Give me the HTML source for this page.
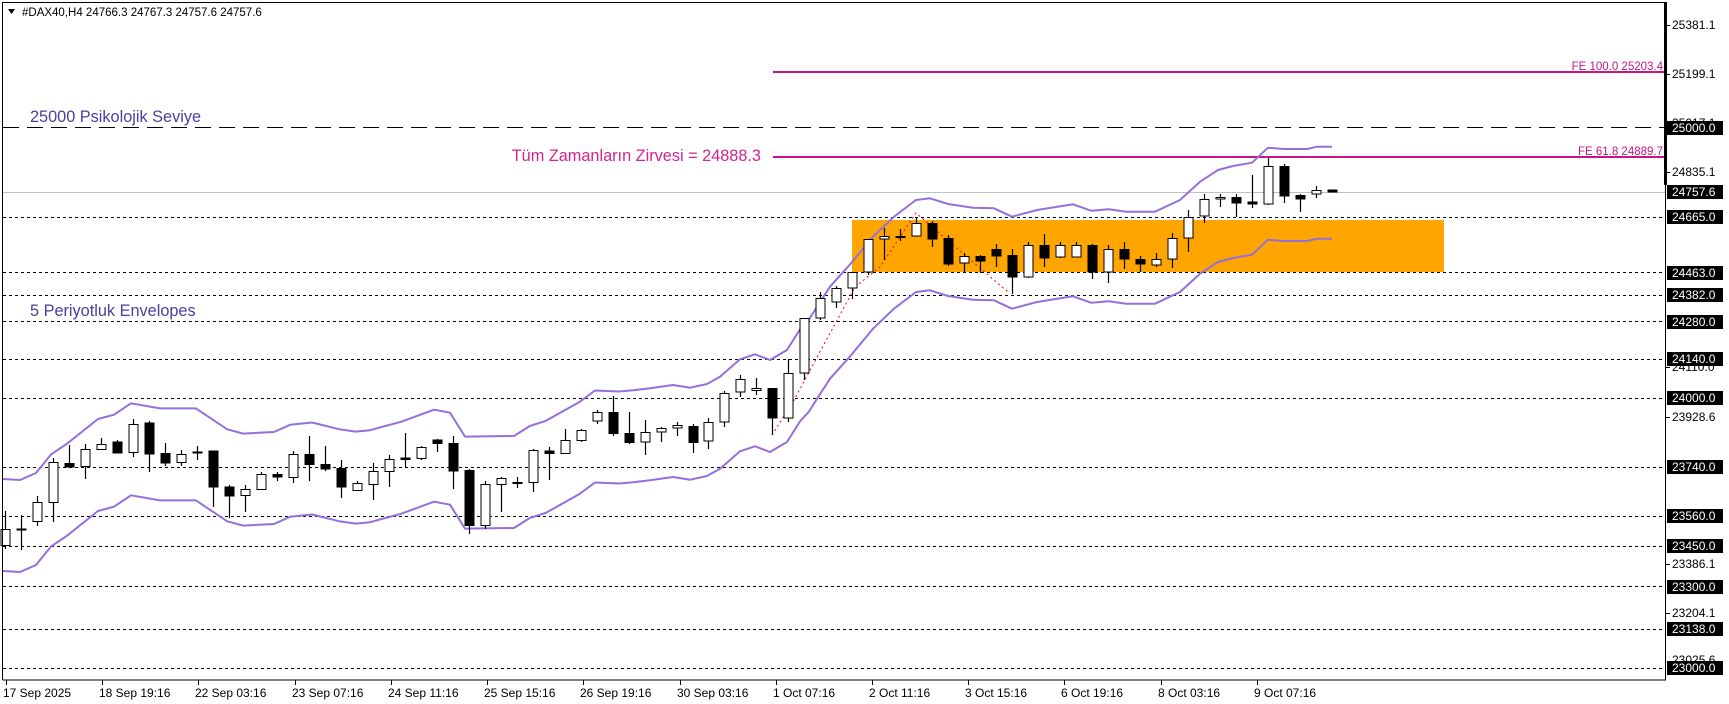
<!DOCTYPE html>
<html><head><meta charset="utf-8"><style>
html,body{margin:0;padding:0;background:#fff;width:1729px;height:704px;overflow:hidden}
svg{display:block}
text{font-family:"Liberation Sans",sans-serif}
.w{fill:#fff;stroke:#000;stroke-width:1}
.b{fill:#000;stroke:#000;stroke-width:1}
.ax{font-size:12px;fill:#000}
.bx{font-size:12px;fill:#fff}
</style></head><body>
<svg width="1729" height="704" viewBox="0 0 1729 704" xmlns="http://www.w3.org/2000/svg">
<rect x="0" y="0" width="1729" height="704" fill="#fff"/>
<rect x="852" y="220" width="592" height="52" fill="#FFA500"/>
<g stroke="#000" stroke-width="1" stroke-dasharray="3,3" fill="none">
<path d="M3 217.5H1665M3 272.5H1665M3 295.5H1665M3 321.5H1665M3 359.5H1665M3 398.5H1665M3 467.5H1665M3 516.5H1665M3 546.5H1665M3 586.5H1665M3 629.5H1665M3 668.5H1665"/>
</g>
<path d="M3 127.5H1665" stroke="#000" stroke-width="1" stroke-dasharray="16,8"/>
<path d="M3 192.5H1665" stroke="#c0c0c0" stroke-width="1"/>
<path d="M773 72H1665M773 157H1665" stroke="#C71585" stroke-width="2"/>
<g fill="none" stroke="#9370DB" stroke-width="2" stroke-linejoin="round">
<path d="M3 479L20 480L36 473L51 454.5L67 443.7L98 419L114 414.7L131 403.3L160 408.4L196 408.4L227 429.2L243 433.6L274 432L290 424.8L312 422.5L339 429.2L356 431.6L370 430.2L401 421.8L434 409.7L450 412.7L465 436.6L514 436L530 425.9L546 420.8L579 402.3L595 390.5L619 391.5L633 390.3L650 388.3L673 385L690 387.7L707 384L720 376.7L740 359.3L755 354.3L770 360L787 350L800 329.3L808.6 320L830 286.7L851 263.3L873 236.7L894 216.7L916 200L930 198.3L948 204L973 207.7L994 208.3L1012 216.7L1037 210L1073 204.3L1091 210.7L1109 209.3L1126 211.7L1155 211.7L1180 200L1200 181.7L1218 170L1233 166L1252 162.7L1268 147.7L1283 149L1307 149L1317 146.7L1332 146.7"/>
<path d="M3 479L20 480L36 473L51 454.5L67 443.7L98 419L114 414.7L131 403.3L160 408.4L196 408.4L227 429.2L243 433.6L274 432L290 424.8L312 422.5L339 429.2L356 431.6L370 430.2L401 421.8L434 409.7L450 412.7L465 436.6L514 436L530 425.9L546 420.8L579 402.3L595 390.5L619 391.5L633 390.3L650 388.3L673 385L690 387.7L707 384L720 376.7L740 359.3L755 354.3L770 360L787 350L800 329.3L808.6 320L830 286.7L851 263.3L873 236.7L894 216.7L916 200L930 198.3L948 204L973 207.7L994 208.3L1012 216.7L1037 210L1073 204.3L1091 210.7L1109 209.3L1126 211.7L1155 211.7L1180 200L1200 181.7L1218 170L1233 166L1252 162.7L1268 147.7L1283 149L1307 149L1317 146.7L1332 146.7" transform="translate(0,92)"/>
</g>
<path d="M772 435L794 400L855 287L880 267L916 213L1008 292" fill="none" stroke="#ff0000" stroke-width="1" stroke-dasharray="2,3"/>
<path stroke="#000" stroke-width="1.2" fill="none" d="M5.5 511V549M21.5 515V550M37.5 496V526M53.5 458V522M69.5 445V468M85.5 444V479M101.5 438V450M117.5 440V453M133.5 419V457M149.5 421V472M165.5 443V466M181.5 450V466M197.5 446V460M213.5 451V507M229.5 485V518M245.5 485V512M261.5 472V490M277.5 472V481M293.5 451V483M309.5 436V481M325.5 446V471M341.5 460V498M357.5 481V491M373.5 463V500M389.5 455V487M405.5 433V467M421.5 446V460M437.5 439V452M453.5 436V489M469.5 469V534M485.5 481V529M501.5 477V512M517.5 477V488M533.5 449V492M549.5 447V480M565.5 429V454M581.5 429V442M597.5 410V424M613.5 396V436M629.5 412V444M645.5 420V455M661.5 427V442M677.5 422V436M693.5 424V453M708.5 418V449M724.5 391V427M740.5 375V397M756.5 378V395M772.5 388V435M788.5 359V422M804.5 318V380M820.5 292V320M836.5 286V308M852.5 272V299M868.5 239V275M884.5 228V260M900.5 229V241M916.5 217V236M932.5 221V247M948.5 235V266M964.5 253V272M980.5 255V273M996.5 244V267M1012.5 249V294M1028.5 242V278M1044.5 234V267M1060.5 242V258M1076.5 242V257M1092.5 244V279M1108.5 245V283M1124.5 242V269M1140.5 256V272M1156.5 253V267M1172.5 233V268M1188.5 210V252M1204.5 194V223M1220.5 194V207M1236.5 194V217M1252.5 175V208M1268.5 158V205M1284.5 164V203M1300.5 194V212M1316.5 186V198"/>
<g>
<rect class="w" x="1" y="529.5" width="9" height="16"/>
<rect class="b" x="17" y="529" width="9" height="1"/>
<rect class="w" x="33" y="502.5" width="9" height="19"/>
<rect class="w" x="49" y="462.5" width="9" height="40"/>
<rect class="b" x="65" y="463.5" width="9" height="3.5"/>
<rect class="w" x="81" y="449.5" width="9" height="17"/>
<rect class="w" x="97" y="444.5" width="9" height="5"/>
<rect class="b" x="113" y="442" width="9" height="11"/>
<rect class="w" x="129" y="424.5" width="9" height="28"/>
<rect class="b" x="145" y="423" width="9" height="31"/>
<rect class="b" x="161" y="453.5" width="9" height="9.5"/>
<rect class="w" x="177" y="454.5" width="9" height="8"/>
<rect class="b" x="193" y="452" width="9" height="1"/>
<rect class="b" x="209" y="451" width="9" height="36"/>
<rect class="b" x="225" y="487" width="9" height="9"/>
<rect class="w" x="241" y="489.5" width="9" height="6"/>
<rect class="w" x="257" y="474.5" width="9" height="15"/>
<rect class="b" x="273" y="474.5" width="9" height="2.5"/>
<rect class="w" x="289" y="454.5" width="9" height="23"/>
<rect class="b" x="305" y="454.5" width="9" height="10"/>
<rect class="b" x="321" y="464.5" width="9" height="4.5"/>
<rect class="b" x="337" y="468.5" width="9" height="18.5"/>
<rect class="w" x="353" y="483.5" width="9" height="7"/>
<rect class="w" x="369" y="471.5" width="9" height="13"/>
<rect class="w" x="385" y="459.5" width="9" height="12"/>
<rect class="b" x="401" y="458" width="9" height="1.5"/>
<rect class="w" x="417" y="447.5" width="9" height="11"/>
<rect class="b" x="433" y="440" width="9" height="3.5"/>
<rect class="b" x="449" y="443.5" width="9" height="27.5"/>
<rect class="b" x="465" y="470.5" width="9" height="55"/>
<rect class="w" x="481" y="484.5" width="9" height="41"/>
<rect class="w" x="497" y="478.5" width="9" height="6"/>
<rect class="b" x="513" y="482.5" width="9" height="1"/>
<rect class="w" x="529" y="450.5" width="9" height="32"/>
<rect class="b" x="545" y="451" width="9" height="2.5"/>
<rect class="w" x="561" y="440.5" width="9" height="13"/>
<rect class="w" x="577" y="430.5" width="9" height="10"/>
<rect class="w" x="593" y="412.5" width="9" height="8.5"/>
<rect class="b" x="609" y="412.5" width="9" height="21"/>
<rect class="b" x="625" y="433.5" width="9" height="9"/>
<rect class="w" x="641" y="432.5" width="9" height="9.5"/>
<rect class="w" x="657" y="428.5" width="9" height="3.5"/>
<rect class="w" x="673" y="425.5" width="9" height="2.5"/>
<rect class="b" x="689" y="426.5" width="9" height="16"/>
<rect class="w" x="704" y="422.5" width="9" height="18.5"/>
<rect class="w" x="720" y="393.5" width="9" height="28.5"/>
<rect class="w" x="736" y="379.5" width="9" height="12.5"/>
<rect class="w" x="752" y="388.5" width="9" height="2"/>
<rect class="b" x="768" y="388.5" width="9" height="29.5"/>
<rect class="w" x="784" y="373.5" width="9" height="44.5"/>
<rect class="w" x="800" y="318.5" width="9" height="54.5"/>
<rect class="w" x="816" y="298.5" width="9" height="19.5"/>
<rect class="w" x="832" y="288.5" width="9" height="13.5"/>
<rect class="w" x="848" y="272.5" width="9" height="15.5"/>
<rect class="w" x="864" y="239.5" width="9" height="32.5"/>
<rect class="w" x="880" y="236.5" width="9" height="2.5"/>
<rect class="b" x="896" y="236.5" width="9" height="1"/>
<rect class="w" x="912" y="223.5" width="9" height="12.5"/>
<rect class="b" x="928" y="223.5" width="9" height="15.5"/>
<rect class="b" x="944" y="238.5" width="9" height="25.5"/>
<rect class="w" x="960" y="256.5" width="9" height="6.5"/>
<rect class="b" x="976" y="256.5" width="9" height="4.5"/>
<rect class="b" x="992" y="249.5" width="9" height="6.5"/>
<rect class="b" x="1008" y="255.5" width="9" height="21.5"/>
<rect class="w" x="1024" y="245.5" width="9" height="31.5"/>
<rect class="b" x="1040" y="245.5" width="9" height="12.5"/>
<rect class="w" x="1056" y="245.5" width="9" height="11.5"/>
<rect class="w" x="1072" y="245.5" width="9" height="11.5"/>
<rect class="b" x="1088" y="245.5" width="9" height="26.5"/>
<rect class="w" x="1104" y="249.5" width="9" height="22.5"/>
<rect class="b" x="1120" y="249.5" width="9" height="9.5"/>
<rect class="b" x="1136" y="259.5" width="9" height="4.5"/>
<rect class="w" x="1152" y="259.5" width="9" height="5.5"/>
<rect class="w" x="1168" y="238.5" width="9" height="20.5"/>
<rect class="w" x="1184" y="217.5" width="9" height="20.5"/>
<rect class="w" x="1200" y="199.5" width="9" height="16.5"/>
<rect class="w" x="1216" y="197.5" width="9" height="1.5"/>
<rect class="b" x="1232" y="197.5" width="9" height="5.5"/>
<rect class="b" x="1248" y="202" width="9" height="2"/>
<rect class="w" x="1264" y="166.5" width="9" height="37.5"/>
<rect class="b" x="1280" y="166.5" width="9" height="29.5"/>
<rect class="b" x="1296" y="195.5" width="9" height="3.5"/>
<rect class="w" x="1312" y="190.5" width="9" height="3.5"/>
<rect class="b" x="1328" y="190" width="9" height="2"/>
</g>
<path d="M2.5 680V2.5H1665.5V680H2.5" fill="none" stroke="#000" stroke-width="1"/>
<rect x="1664" y="2" width="3" height="183" fill="#000"/>
<path d="M8 9H15L11.5 14Z" fill="#000"/>
<text x="22" y="16" style="font-size:11.5px" fill="#000">#DAX40,H4  24766.3 24767.3 24757.6 24757.6</text>
<text x="30" y="122" style="font-size:16.3px" fill="#4a3f9e">25000 Psikolojik Seviye</text>
<text x="30" y="316" style="font-size:16.3px" fill="#4a3f9e">5 Periyotluk Envelopes</text>
<text x="761" y="161" text-anchor="end" style="font-size:16.3px" fill="#d4248c">Tüm Zamanların Zirvesi = 24888.3</text>
<text x="1663" y="70" text-anchor="end" style="font-size:11.5px" fill="#C71585">FE 100.0 25203.4</text>
<text x="1663" y="155" text-anchor="end" style="font-size:11.5px" fill="#C71585">FE 61.8 24889.7</text>
<path stroke="#000" stroke-width="1" d="M1666 25.5H1670M1666 74.5H1670M1666 172.5H1670M1666 417.5H1670M1666 564.5H1670M1666 613.5H1670M1666 367.5H1670M6.5 680V685M102.5 680V685M198.5 680V685M295.5 680V685M391.5 680V685M487.5 680V685M583.5 680V685M680.5 680V685M776.5 680V685M872.5 680V685M968.5 680V685M1064.5 680V685M1161.5 680V685M1257.5 680V685"/>
<g>
<text class="ax" x="1672" y="29">25381.1</text>
<text class="ax" x="1672" y="78">25199.1</text>
<text class="ax" x="1672" y="127">25017.1</text>
<text class="ax" x="1672" y="176">24835.1</text>
<text class="ax" x="1672" y="276">24471.1</text>
<text class="ax" x="1672" y="326">24290.1</text>
<text class="ax" x="1672" y="371">24110.0</text>
<text class="ax" x="1672" y="421">23928.6</text>
<text class="ax" x="1672" y="568">23386.1</text>
<text class="ax" x="1672" y="617">23204.1</text>
<text class="ax" x="1672" y="664">23025.6</text>
</g>
<g fill="#000">
<rect x="1667" y="121" width="56" height="14"/>
<rect x="1667" y="185" width="56" height="14"/>
<rect x="1667" y="210" width="56" height="14"/>
<rect x="1667" y="266" width="56" height="14"/>
<rect x="1667" y="288" width="56" height="14"/>
<rect x="1667" y="315" width="56" height="14"/>
<rect x="1667" y="352" width="56" height="14"/>
<rect x="1667" y="391" width="56" height="14"/>
<rect x="1667" y="460" width="56" height="14"/>
<rect x="1667" y="509" width="56" height="14"/>
<rect x="1667" y="539" width="56" height="14"/>
<rect x="1667" y="580" width="56" height="14"/>
<rect x="1667" y="622" width="56" height="14"/>
<rect x="1667" y="661" width="56" height="14"/>
</g>
<g>
<text class="bx" x="1672" y="132">25000.0</text>
<text class="bx" x="1672" y="196">24757.6</text>
<text class="bx" x="1672" y="221">24665.0</text>
<text class="bx" x="1672" y="277">24463.0</text>
<text class="bx" x="1672" y="299">24382.0</text>
<text class="bx" x="1672" y="326">24280.0</text>
<text class="bx" x="1672" y="363">24140.0</text>
<text class="bx" x="1672" y="402">24000.0</text>
<text class="bx" x="1672" y="471">23740.0</text>
<text class="bx" x="1672" y="520">23560.0</text>
<text class="bx" x="1672" y="550">23450.0</text>
<text class="bx" x="1672" y="591">23300.0</text>
<text class="bx" x="1672" y="633">23138.0</text>
<text class="bx" x="1672" y="672">23000.0</text>
</g>
<g>
<text class="ax" x="3" y="697">17 Sep 2025</text>
<text class="ax" x="99" y="697">18 Sep 19:16</text>
<text class="ax" x="195" y="697">22 Sep 03:16</text>
<text class="ax" x="292" y="697">23 Sep 07:16</text>
<text class="ax" x="388" y="697">24 Sep 11:16</text>
<text class="ax" x="484" y="697">25 Sep 15:16</text>
<text class="ax" x="580" y="697">26 Sep 19:16</text>
<text class="ax" x="677" y="697">30 Sep 03:16</text>
<text class="ax" x="773" y="697">1 Oct 07:16</text>
<text class="ax" x="869" y="697">2 Oct 11:16</text>
<text class="ax" x="965" y="697">3 Oct 15:16</text>
<text class="ax" x="1061" y="697">6 Oct 19:16</text>
<text class="ax" x="1158" y="697">8 Oct 03:16</text>
<text class="ax" x="1254" y="697">9 Oct 07:16</text>
</g>
</svg>
</body></html>
